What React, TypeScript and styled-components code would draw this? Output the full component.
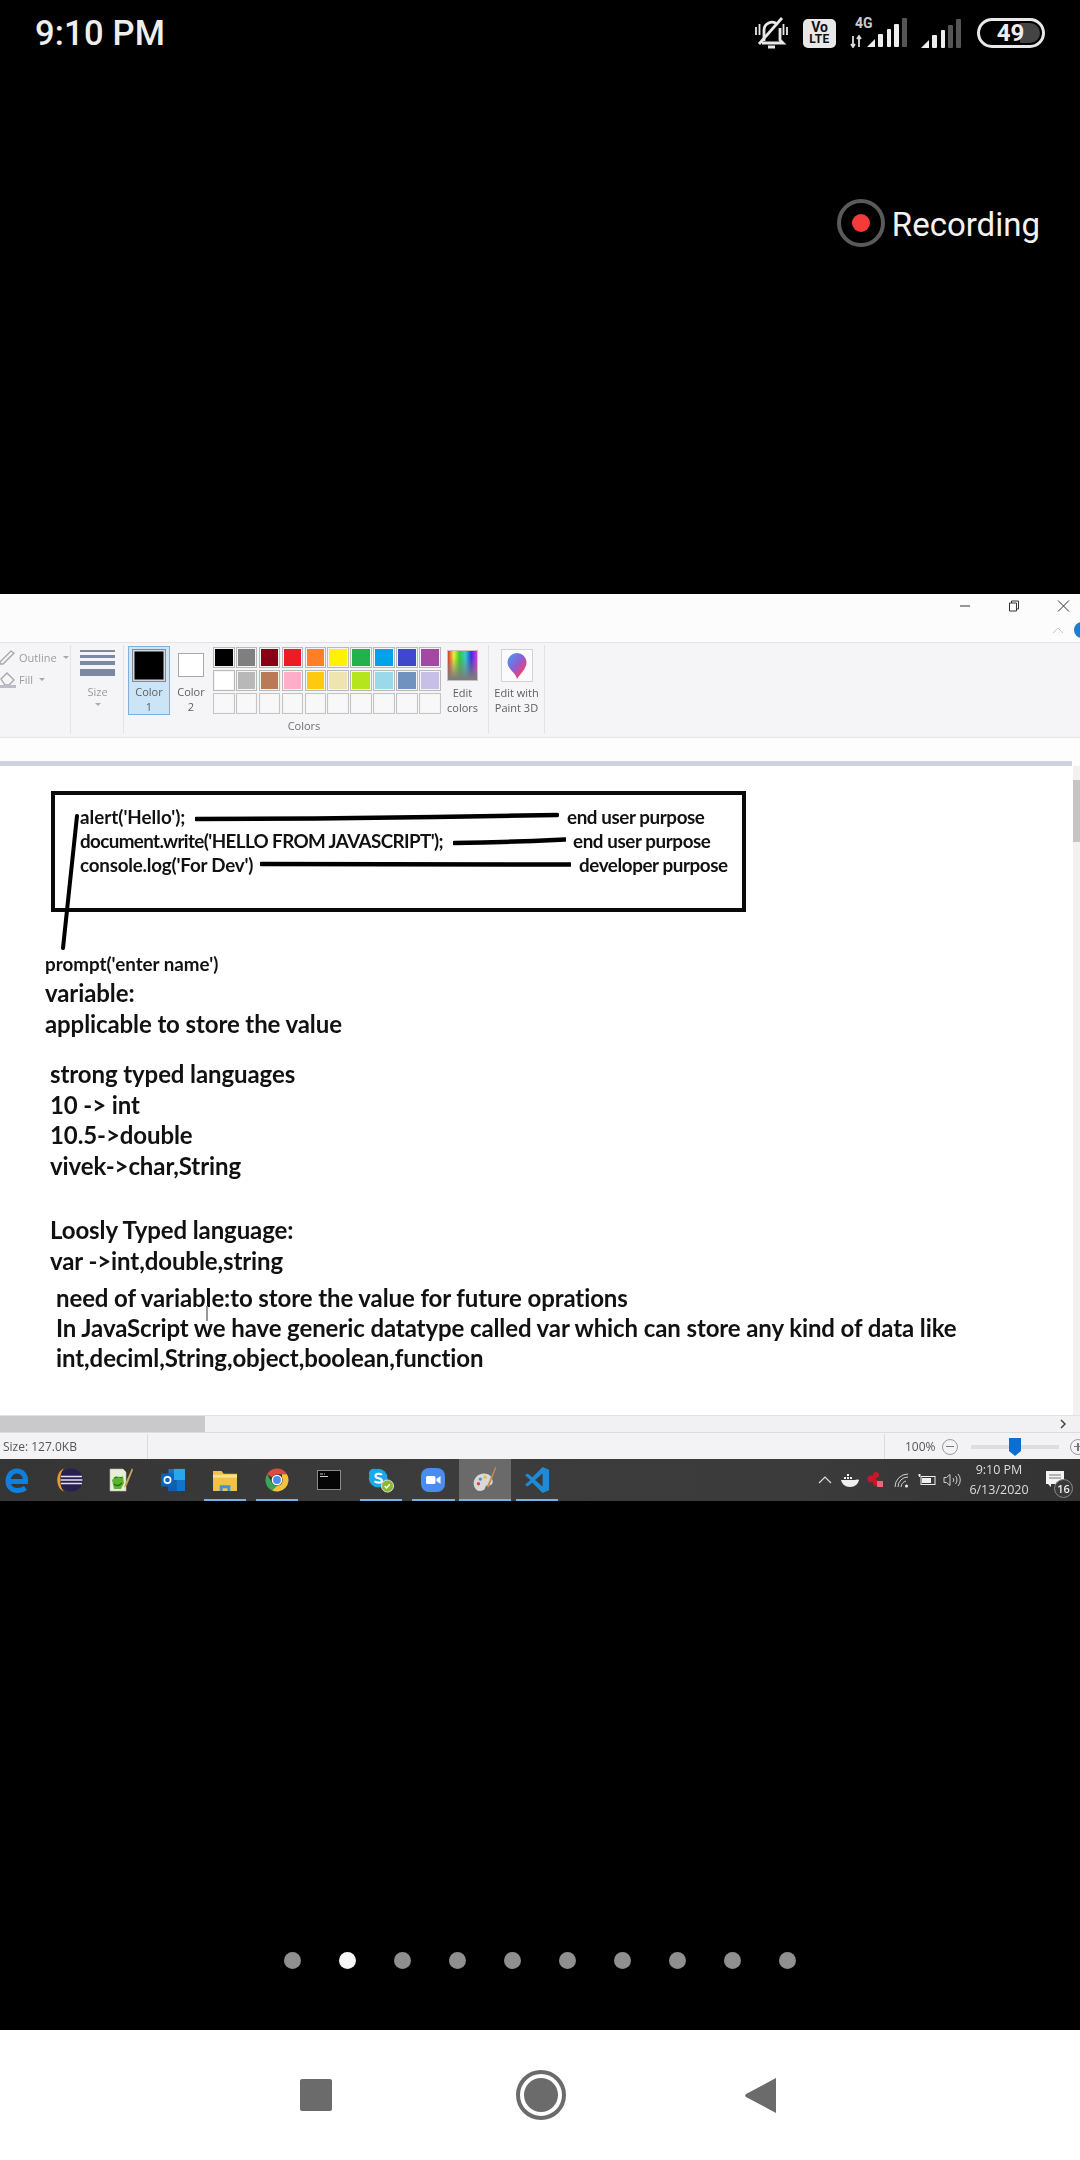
import React from "react";
import styled, { createGlobalStyle } from "styled-components";

const Global = createGlobalStyle`
  html, body { margin: 0; padding: 0; background: #000; }
  * { box-sizing: border-box; }
`;

const Screen = styled.div`
  width: 1080px;
  height: 2160px;
  background: #000;
  display: flex;
  flex-direction: column;
  overflow: hidden;
  font-family: "Roboto", "Liberation Sans", sans-serif;
`;

/* ---------- Phone status area ---------- */
const TopBlack = styled.div`
  height: 594px;
  flex: none;
`;
const StatusRow = styled.div`
  height: 66px;
  padding: 0 35px 0 35px;
  display: flex;
  align-items: center;
  justify-content: space-between;
`;
const Clock = styled.div`
  color: #eee;
  font-size: 34.5px;
  font-weight: 500;
  letter-spacing: 0.2px;
`;
const StatusIcons = styled.div`
  display: flex;
  align-items: center;
`;
const VoLte = styled.div`
  width: 33px;
  height: 29px;
  margin: 0 14px 0 15px;
  background: #e8e8e8;
  border-radius: 5px;
  color: #111;
  font-weight: 700;
  display: flex;
  flex-direction: column;
  align-items: center;
  justify-content: center;
  line-height: 12px;
`;
const VoTop = styled.span`
  font-size: 14px;
`;
const VoBottom = styled.span`
  font-size: 12px;
  letter-spacing: 0.4px;
`;
const Net = styled.div`
  position: relative;
  width: 57px;
  height: 30px;
`;
const NetLabel = styled.span`
  position: absolute;
  left: 5px;
  top: -2px;
  color: #ccc;
  font-size: 14px;
  font-weight: 700;
  line-height: 14px;
`;
const SecondSignal = styled.svg`
  margin: 0 16px 0 14px;
  display: block;
`;
const Battery = styled.div`
  position: relative;
  width: 68px;
  height: 30px;
  border: 3px solid #e8e8e8;
  border-radius: 15px;
  color: #eee;
  font-size: 24px;
  font-weight: 700;
  display: flex;
  align-items: center;
  justify-content: center;
  &::after {
    content: "";
    position: absolute;
    right: 2px;
    top: 2px;
    bottom: 2px;
    width: 20px;
    background: #444;
    border-radius: 0 10px 10px 0;
  }
`;
const BatteryValue = styled.span`
  position: relative;
  z-index: 1;
  margin-left: -1px;
`;
const RecordingRow = styled.div`
  margin-top: 133px;
  padding-right: 40px;
  display: flex;
  justify-content: flex-end;
  align-items: center;
  gap: 7px;
`;
const RecordRing = styled.div`
  width: 48px;
  height: 48px;
  border-radius: 50%;
  border: 4px solid #5a5a5a;
  background: #000;
  display: flex;
  align-items: center;
  justify-content: center;
  &::before {
    content: "";
    width: 18px;
    height: 18px;
    border-radius: 50%;
    background: #f53a3a;
  }
`;
const RecordText = styled.span`
  color: #f2f2f2;
  font-size: 33px;
  margin-top: 2px;
`;

/* ---------- Paint window ---------- */
const Window = styled.div`
  height: 907px;
  flex: none;
  display: flex;
  flex-direction: column;
  background: #fff;
  font-family: "Open Sans", "Liberation Sans", sans-serif;
  overflow: hidden;
  filter: blur(0.35px);
`;
const TitleBar = styled.div`
  height: 48px;
  background: #fdfcfd;
  display: flex;
  flex-direction: column;
`;
const Controls = styled.div`
  height: 24px;
  display: flex;
  align-items: center;
  justify-content: flex-end;
  gap: 33px;
  padding-right: 9px;
`;
const Collapse = styled.div`
  height: 24px;
  display: flex;
  align-items: center;
  justify-content: flex-end;
  gap: 10px;
`;
const HelpDot = styled.div`
  width: 16px;
  height: 16px;
  margin-right: -10px;
  border-radius: 50%;
  background: #1a7ed4;
`;
const Ribbon = styled.div`
  height: 96px;
  flex: none;
  background: #f5f5f7;
  border-top: 1px solid #e3e3e3;
  border-bottom: 1px solid #e6e6e6;
  display: flex;
`;
const Group = styled.div<{ $w: number }>`
  width: ${(p) => p.$w}px;
  flex: none;
  margin: 2px 0 3px;
  border-right: 1px solid #e4e4e6;
  display: flex;
  flex-direction: column;
`;
const ShapeRow = styled.div`
  height: 22px;
  display: flex;
  align-items: center;
  gap: 3px;
  color: #9c9c9c;
  font-size: 11px;
`;
const ShapeStack = styled.div`
  padding-top: 1px;
`;
const Caret = styled.span`
  width: 0;
  height: 0;
  margin-left: 3px;
  border-left: 3px solid transparent;
  border-right: 3px solid transparent;
  border-top: 3px solid #aaa;
`;
const SizeCol = styled.div`
  padding: 5px 8px 0 9px;
  display: flex;
  flex-direction: column;
  align-items: stretch;
`;
const SizeLine = styled.div<{ $h: number }>`
  height: ${(p) => p.$h}px;
  margin-bottom: 3.5px;
  background: #7d89a3;
`;
const SizeLabel = styled.div`
  margin-top: 5px;
  text-align: center;
  color: #9a9a9a;
  font-size: 11px;
  line-height: 16px;
`;
const CaretCenter = styled.div`
  margin: 3px auto 0;
  width: 0;
  height: 0;
  border-left: 3px solid transparent;
  border-right: 3px solid transparent;
  border-top: 3px solid #aaa;
`;
const ColorsBody = styled.div`
  display: flex;
  padding: 1px 0 0 4px;
  height: 74px;
`;
const ColorsFoot = styled.div`
  text-align: center;
  color: #707070;
  font-size: 11px;
  line-height: 16px;
  margin-left: -4px;
`;
const ColorTool = styled.div<{ $active?: boolean }>`
  width: 42px;
  height: 69px;
  display: flex;
  flex-direction: column;
  align-items: center;
  background: ${(p) => (p.$active ? "#cce4f7" : "transparent")};
  border: 1px solid ${(p) => (p.$active ? "#7eb0da" : "transparent")};
`;
const BigSwatch = styled.div`
  width: 34px;
  height: 34px;
  margin-top: 2px;
  background: #000;
  border: 1px solid #8a8a8a;
  box-shadow: inset 0 0 0 1.5px #cfd8e2;
`;
const SmallSwatch = styled.div`
  width: 26px;
  height: 25px;
  margin: 6px 0 8px;
  background: #fff;
  border: 1px solid #a8a8a8;
`;
const ToolText = styled.div<{ $mt?: number }>`
  margin-top: ${(p) => p.$mt ?? 0}px;
  color: #5e5e5e;
  font-size: 11px;
  line-height: 14.5px;
  text-align: center;
  white-space: nowrap;
`;
const Palette = styled.div`
  margin: 1px 0 0 1px;
  display: grid;
  grid-template-columns: repeat(10, 21.5px);
  grid-auto-rows: 21px;
  column-gap: 1.4px;
  row-gap: 2px;
  align-self: flex-start;
`;
const Cell = styled.div<{ $c?: string }>`
  border: 1px solid ${(p) => (p.$c ? "#b9b9b9" : "#c4c4c4")};
  background: ${(p) => p.$c ?? "#f8f8f9"};
  box-shadow: inset 0 0 0 1px #f4f4f4;
`;
const EditTool = styled.div`
  width: 44px;
  display: flex;
  flex-direction: column;
  align-items: center;
`;
const Rainbow = styled.div`
  width: 31px;
  height: 31px;
  margin: 4px 0 5px;
  border: 1px solid #c2c2c2;
  background: linear-gradient(to bottom, rgba(120, 120, 120, 0) 20%, #7c7c7c 95%),
    linear-gradient(to right, #d33, #ee3, #3c3, #3cc, #33d, #d3d);
`;
const Paint3dTool = styled.div`
  display: flex;
  flex-direction: column;
  align-items: center;
  padding-top: 4px;
`;
const Paint3dButton = styled.div`
  width: 32px;
  height: 33px;
  background: #fbfbfb;
  border: 1px solid #d2d2d2;
  display: flex;
  align-items: center;
  justify-content: center;
  margin-bottom: 4px;
`;
const RibbonGap = styled.div`
  height: 23px;
  flex: none;
  background: #fdfdfe;
`;
const Band = styled.div`
  height: 5px;
  flex: none;
  margin-right: 8px;
  background: #cdd3e2;
`;
const CanvasRow = styled.div`
  height: 649px;
  flex: none;
  display: flex;
`;
const Canvas = styled.div`
  position: relative;
  flex: 1;
  background: #fff;
  color: #111;
  font-family: "Lato", "Open Sans", sans-serif;
  font-weight: 700;
  padding-top: 25px;
`;
const VScroll = styled.div`
  width: 7px;
  background: #f1f1f2;
  padding-top: 14px;
`;
const VThumb = styled.div`
  height: 62px;
  background: #c5c5c5;
`;
const CodeBox = styled.div`
  width: 695px;
  height: 121px;
  margin-left: 51px;
  padding: 10px 0 0 25px;
  border: 4px solid #0a0a0a;
  display: flex;
  flex-direction: column;
`;
const CodeRow = styled.div`
  height: 23.8px;
  display: flex;
  align-items: center;
  font-size: 18.8px;
  white-space: nowrap;
`;
const CodeText = styled.span<{ $w: number; $ls?: number }>`
  width: ${(p) => p.$w}px;
  flex: none;
  letter-spacing: ${(p) => p.$ls ?? 0}px;
`;
const Stroke = styled.svg<{ $w: number; $ml: number }>`
  width: ${(p) => p.$w}px;
  height: 12px;
  margin-left: ${(p) => p.$ml}px;
  flex: none;
`;
const PurposeText = styled.span<{ $ml: number }>`
  margin-left: ${(p) => p.$ml}px;
  letter-spacing: -0.4px;
`;
const PromptStroke = styled.svg`
  position: absolute;
  left: 60px;
  top: 48px;
  pointer-events: none;
`;
const Note = styled.div<{ $ml: number; $mt: number; $lh: number }>`
  margin-left: ${(p) => p.$ml}px;
  margin-top: ${(p) => p.$mt}px;
  line-height: ${(p) => p.$lh}px;
  font-size: 24px;
  letter-spacing: -0.1px;
  white-space: nowrap;
`;
const PromptLine = styled.div`
  margin: 40px 0 0 45px;
  line-height: 24px;
  font-size: 18.8px;
`;
const IBeam = styled.span`
  position: absolute;
  left: 206px;
  top: 540px;
  width: 1.5px;
  height: 15px;
  background: #999;
`;
const HScroll = styled.div`
  height: 17px;
  flex: none;
  background: #f1f1f3;
  border-top: 1px solid #e2e2e2;
  display: flex;
  align-items: center;
  justify-content: space-between;
  padding-right: 13px;
`;
const HThumb = styled.div`
  width: 205px;
  height: 16px;
  background: #c9c8ca;
`;
const StatusStrip = styled.div`
  height: 27px;
  flex: none;
  background: #f3f3f5;
  border-top: 1px solid #dcdcdc;
  display: flex;
  align-items: stretch;
  color: #555;
  font-size: 12px;
`;
const SizeCell = styled.div`
  width: 148px;
  margin-top: 1px;
  padding-left: 3px;
  border-right: 1px solid #dcdcdc;
  display: flex;
  align-items: center;
`;
const ZoomCell = styled.div`
  margin: 1px 0 0 auto;
  width: 196px;
  border-left: 1px solid #dcdcdc;
  padding-left: 20px;
  display: flex;
  align-items: center;
`;
const ZoomPct = styled.span`
  width: 37px;
  flex: none;
`;
const ZoomBtn = styled.span<{ $plus?: boolean }>`
  position: relative;
  width: 16px;
  height: 16px;
  flex: none;
  border: 1px solid #9a9a9a;
  border-radius: 50%;
  display: flex;
  align-items: center;
  justify-content: center;
  &::before {
    content: "";
    width: 8px;
    height: 1.5px;
    background: #777;
  }
  &::after {
    content: "";
    display: ${(p) => (p.$plus ? "block" : "none")};
    position: absolute;
    width: 1.5px;
    height: 8px;
    background: #777;
  }
`;
const ZoomTrack = styled.div`
  position: relative;
  width: 88px;
  height: 4px;
  margin: 0 11px 0 13px;
  flex: none;
  background: #dedede;
`;
const ZoomThumb = styled.svg`
  position: absolute;
  left: 38px;
  top: -8px;
`;

/* ---------- Taskbar ---------- */
const Taskbar = styled.div`
  height: 42px;
  flex: none;
  background: linear-gradient(to right, #353535, #3c3c3c 40%, #3b3b3b 75%, #333);
  display: flex;
  margin-left: -9px;
  color: #dcdcdc;
`;
const TaskSlot = styled.div<{ $on?: boolean }>`
  position: relative;
  width: 52px;
  flex: none;
  display: flex;
  align-items: center;
  justify-content: center;
  background: ${(p) => (p.$on ? "#6a6a6a" : "transparent")};
`;
const TaskUnderline = styled.span<{ $full?: boolean; $r?: number }>`
  position: absolute;
  left: ${(p) => (p.$full ? 0 : 5)}px;
  right: ${(p) => (p.$full ? 0 : p.$r ?? 5)}px;
  bottom: 0;
  height: 2px;
  background: #74b3e3;
`;
const Tray = styled.div`
  margin-left: auto;
  display: flex;
  align-items: center;
`;
const TraySlot = styled.div`
  width: 25.5px;
  display: flex;
  align-items: center;
  justify-content: center;
`;
const TrayClock = styled.div`
  width: 68px;
  text-align: center;
  font-size: 12.5px;
  line-height: 20px;
`;
const Notify = styled.div`
  position: relative;
  width: 47px;
  height: 42px;
`;
const NotifyBadge = styled.span`
  position: absolute;
  left: 21px;
  top: 20px;
  width: 19px;
  height: 19px;
  border: 1px solid #888;
  border-radius: 50%;
  background: #3a3a3a;
  color: #eee;
  font-size: 11px;
  font-weight: 600;
  display: flex;
  align-items: center;
  justify-content: center;
`;
const NotifyBubble = styled.svg`
  position: absolute;
  left: 13px;
  top: 12px;
`;

/* ---------- Bottom ---------- */
const BottomBlack = styled.div`
  height: 529px;
  flex: none;
  padding-top: 451px;
`;
const Dots = styled.div`
  display: flex;
  padding-left: 284px;
  gap: 38px;
`;
const Dot = styled.span<{ $on?: boolean }>`
  width: 17px;
  height: 17px;
  border-radius: 50%;
  background: ${(p) => (p.$on ? "#f6f6f6" : "#8f8f8f")};
`;
const NavBar = styled.div`
  height: 130px;
  flex: none;
  background: #fff;
  display: flex;
  align-items: center;
  padding: 0 0 0 300px;
`;
const NavSquare = styled.div`
  width: 32px;
  height: 32px;
  border-radius: 2px;
  background: #6b6b6b;
`;
const NavHome = styled.div`
  width: 50px;
  height: 50px;
  margin-left: 184px;
  border: 4px solid #6b6b6b;
  border-radius: 50%;
  display: flex;
  align-items: center;
  justify-content: center;
  &::before {
    content: "";
    width: 34px;
    height: 34px;
    border-radius: 50%;
    background: #6b6b6b;
  }
`;
const NavBack = styled.svg`
  margin-left: 179px;
`;

/* ---------- Drawings ---------- */
const BellOff = () => (
  <svg width="33" height="32" viewBox="0 0 33 32" fill="none" stroke="#e8e8e8" strokeWidth="2.8">
    <path d="M9 24V13a8 8 0 0 1 13-6M25 11v12l3 3H7" />
    <path d="M4 27 27 1" strokeWidth="2.8" />
    <path d="M1 10v8M4.500 7v11M28.500 7v11M32 10v8" strokeWidth="1.800" />
    <path d="M13 30h7" strokeWidth="3" />
  </svg>
);

const Signal = ({ lit }: { lit: number }) => {
  const xs = [0, 11, 20, 27, 35];
  const ws = [8, 5, 4, 5, 5];
  const tops = [21, 16, 11, 6, 0];
  const col = (i: number) => (i < lit ? "#eee" : "#555");
  return (
    <>
      {xs.map((x, i) =>
        i === 0 ? (
          <path key={i} d={`M0 29 8 ${tops[0]}v8z`} fill={col(i)} />
        ) : (
          <rect key={i} x={x} y={tops[i]} width={ws[i]} height={29 - tops[i]} rx="1" fill={col(i)} />
        ),
      )}
    </>
  );
};

const NetIcon = () => (
  <svg width="57" height="30" viewBox="0 0 57 30" style={{ display: "block" }}>
    <g transform="translate(17 0)">
      <Signal lit={4} />
    </g>
    <path d="M3 18v11M1 26l2 3 2-3M9 29V18M7 21l2-3 2 3" stroke="#ddd" strokeWidth="1.8" fill="none" />
  </svg>
);

const PencilIcon = () => (
  <svg width="16" height="16" viewBox="0 0 16 16" fill="none" stroke="#a6a6a6" strokeWidth="1.3">
    <path d="M0 13 L11 2 L14 4 L3 15 L0 15Z" />
  </svg>
);
const BucketIcon = () => (
  <svg width="16" height="17" viewBox="0 0 16 17" fill="none" stroke="#a6a6a6" strokeWidth="1.3">
    <path d="M1 8 7 2l7 7-5 5H5z" />
    <rect x="0" y="14" width="16" height="3" fill="#b8bdc8" stroke="none" />
  </svg>
);

const Balloon = () => (
  <svg width="20" height="28" viewBox="0 0 20 28">
    <defs>
      <linearGradient id="ball" x1="0" y1="0" x2="1" y2="1">
        <stop offset="0" stopColor="#3aa7e8" />
        <stop offset="0.45" stopColor="#8a5fd8" />
        <stop offset="0.75" stopColor="#e8427a" />
        <stop offset="1" stopColor="#f58a2a" />
      </linearGradient>
    </defs>
    <path d="M10 1a9.5 9.5 0 0 1 9.5 9.5C19.500 17 13 22 10 27 9 21 .5 17 .5 10.500A9.500 9.500 0 0 1 10 1z" fill="url(#ball)" />
  </svg>
);

const EdgeIcon = () => (
  <svg width="24" height="25" viewBox="0 0 24 25" fill="none" stroke="#0f80dc" strokeWidth="5">
    <path d="M3 13.500h17.500C21 7 17 3 12 3 7 3 3 7 3 13c0 6 4 9.500 9.500 9.500 3 0 6-1 8-2.500" />
  </svg>
);
const EclipseIcon = () => (
  <svg width="27" height="24" viewBox="0 0 27 24">
    <ellipse cx="15" cy="12" rx="12" ry="11.500" fill="#2a2050" />
    <path d="M8 .5C-1 4-1 20 8 23.500 3 19 3 5 8 .5z" fill="#e89a2c" />
    <path d="M5 8.500h21M4.500 12h22M5 15.500h21" stroke="#e4e2f0" strokeWidth="1.500" />
  </svg>
);
const NotepadIcon = () => (
  <svg width="24" height="24" viewBox="0 0 24 24">
    <path d="M1 1h13l3 3v19H1z" fill="#e9efd6" stroke="#bbb" strokeWidth="0.6" />
    <path d="M3 12l4-4 3 2 4-2 1 7-3 6H5z" fill="#5cb531" />
    <path d="M5 10c2-1 6-1 8 0M5 16c2 2 5 2 8-1" stroke="#1e6e12" strokeWidth="1.200" fill="none" />
    <path d="M23 0 16 16l-1 4 3-3L24 2z" fill="#c9a455" />
  </svg>
);
const OutlookIcon = () => (
  <svg width="24" height="24" viewBox="0 0 26 26">
    <rect x="8" y="1" width="18" height="24" fill="#1273c9" />
    <rect x="14" y="1" width="12" height="12" fill="#28a8ea" />
    <rect x="8" y="13" width="9" height="12" fill="#0f5ea8" />
    <rect x="0" y="6" width="14" height="14" rx="1" fill="#0a65b8" />
    <circle cx="7" cy="13" r="3.400" fill="none" stroke="#fff" strokeWidth="1.800" />
  </svg>
);
const FolderIcon = () => (
  <svg width="24" height="23" viewBox="0 0 25 24">
    <path d="M0 2h9l2 3h14v18H0z" fill="#f0c24a" />
    <path d="M0 6h25v3H0z" fill="#fbe08a" />
    <path d="M7 23v-6h11v6h-3v-3h-5v3z" fill="#3a96d8" />
  </svg>
);
const ChromeIcon = () => (
  <svg width="24" height="24" viewBox="-13 -13 26 26">
    <path d="M0-12.500A12.500 12.500 0 0 1 10.800-6.250H0A6.250 6.250 0 0 0-5.400-3.100L-10.800-6.250A12.500 12.500 0 0 1 0-12.500z" fill="#dd4b3e" />
    <path d="M-10.800-6.250-5.400 3.100A6.250 6.250 0 0 0 0 6.250L-5.400 11.300A12.500 12.500 0 0 1-10.800-6.250z" fill="#3aa757" />
    <path d="M10.800-6.250A12.500 12.500 0 0 1-5.400 11.300L0 6.250A6.250 6.250 0 0 0 5.400-3.100V-6.250z" fill="#f5c33b" />
    <circle r="5" fill="#4a8df0" stroke="#fff" strokeWidth="1.500" />
  </svg>
);
const CmdIcon = () => (
  <svg width="24" height="20" viewBox="0 0 24 20">
    <rect x="0.500" y="0.500" width="23" height="19" fill="#050505" stroke="#8a8a8a" />
    <path d="M3 4h3M7 4h1M3 6.500h8" stroke="#ccc" strokeWidth="1" />
  </svg>
);
const SkypeIcon = () => (
  <svg width="28" height="26" viewBox="0 0 30 28">
    <circle cx="12" cy="12" r="10" fill="#1aa9e8" />
    <circle cx="7" cy="7" r="5" fill="#1aa9e8" />
    <circle cx="17" cy="17" r="5" fill="#1aa9e8" />
    <path d="M16 8.500c-1-1.500-7-2-7 1.200 0 3.200 7 1.800 7 5 0 3-6 2.600-8 .6" stroke="#fff" strokeWidth="2.300" fill="none" />
    <circle cx="22" cy="20.500" r="6.500" fill="#8ab82f" stroke="#e8e8e8" strokeWidth="1" />
    <path d="M19 20.500l2 2 3.500-4" stroke="#fff" strokeWidth="1.500" fill="none" />
  </svg>
);
const ZoomIcon = () => (
  <svg width="24" height="24" viewBox="0 0 24 24">
    <rect width="24" height="24" rx="8" fill="#4a8cf2" />
    <rect x="5" y="8" width="9.500" height="8" rx="1.500" fill="#fff" />
    <path d="M15.500 11l4-3v8l-4-3z" fill="#fff" />
  </svg>
);
const PaletteIcon = () => (
  <svg width="26" height="28" viewBox="0 0 26 30">
    <path d="M12 8C5 8 0 14 1 20s6 8 10 6 1-5 5-5 6-2 5-6-4-7-9-7z" fill="#d8d8d8" />
    <circle cx="6" cy="19" r="1.800" fill="#d64a3c" />
    <circle cx="8" cy="14" r="1.800" fill="#4a90d0" />
    <circle cx="13" cy="12" r="1.800" fill="#e5c23a" />
    <path d="M24 1 15 22l2 1L25 2z" fill="#c78a52" />
  </svg>
);
const VsCodeIcon = () => (
  <svg width="26" height="26" viewBox="0 0 26 28">
    <path d="M19 0 26 3v22l-7 3-11-11-5 4-3-2 6-5-6-5 3-2 5 4z" fill="#1f8ad6" />
    <path d="M19 7v14l-8-7z" fill="#3a3a3a" />
  </svg>
);
const Whale = () => (
  <svg width="18" height="13" viewBox="0 0 18 13" fill="#f0f0f0">
    <path d="M0 6h14c1 0 2-1 4 0-1 4-4 7-9 7S1 10 0 6z" />
    <rect x="3" y="3" width="2" height="2" />
    <rect x="6" y="3" width="2" height="2" />
    <rect x="9" y="3" width="2" height="2" />
    <rect x="6" y="0" width="2" height="2" />
  </svg>
);
const RedCluster = () => (
  <svg width="18" height="16" viewBox="0 0 18 16">
    <circle cx="4" cy="7" r="3.500" fill="#c8172a" />
    <circle cx="9" cy="3" r="3" fill="#c8172a" />
    <circle cx="9" cy="11" r="3" fill="#c8172a" />
    <path d="M4 7 9 3v8z" fill="#c8172a" />
    <rect x="10" y="9" width="6" height="6" fill="#e86a78" />
  </svg>
);
const Wifi = () => (
  <svg width="15" height="15" viewBox="0 0 15 15" fill="none" stroke="#cfcfcf" strokeWidth="1">
    <path d="M1 14A13 13 0 0 1 14 1M4 14A10 10 0 0 1 14 4M7 14A7 7 0 0 1 12 8" />
    <circle cx="12.500" cy="13" r="1.500" fill="#eee" stroke="none" />
  </svg>
);
const BatteryTray = () => (
  <svg width="18" height="12" viewBox="0 0 18 12">
    <rect x="3" y="2.500" width="14" height="8" fill="none" stroke="#eee" />
    <rect x="4" y="4" width="9" height="5" fill="#eee" />
    <path d="M0 1h3M1.500 0v3" stroke="#eee" />
  </svg>
);
const Speaker = () => (
  <svg width="18" height="14" viewBox="0 0 18 14" fill="none" stroke="#cfcfcf" strokeWidth="1">
    <path d="M1 4.500h2.500L7 1.500v11L3.500 9.500H1z" />
    <path d="M10 5a3 3 0 0 1 0 4M12.500 3a6 6 0 0 1 0 8M15 1a9 9 0 0 1 0 12" />
  </svg>
);

const row1 = ["#000000", "#7f7f7f", "#880015", "#ed1c24", "#ff7f27", "#fff200", "#22b14c", "#00a2e8", "#3f48cc", "#a349a4"];
const row2 = ["#ffffff", "#b8b8b8", "#b97a57", "#ffaec9", "#ffc90e", "#efe4b0", "#b5e61d", "#99d9ea", "#7092be", "#c8bfe7"];
const row3 = Array.from({ length: 10 }, () => undefined as string | undefined);

export default function App() {
  return (
    <Screen>
      <Global />
      <TopBlack>
        <StatusRow>
          <Clock>9:10 PM</Clock>
          <StatusIcons>
            <BellOff />
            <VoLte>
              <VoTop>Vo</VoTop>
              <VoBottom>LTE</VoBottom>
            </VoLte>
            <Net>
              <NetIcon />
              <NetLabel>4G</NetLabel>
            </Net>
            <SecondSignal width="40" height="29" viewBox="0 0 40 29">
              <Signal lit={3} />
            </SecondSignal>
            <Battery>
              <BatteryValue>49</BatteryValue>
            </Battery>
          </StatusIcons>
        </StatusRow>
        <RecordingRow>
          <RecordRing />
          <RecordText>Recording</RecordText>
        </RecordingRow>
      </TopBlack>

      <Window>
        <TitleBar>
          <Controls>
            <svg width="16" height="12" viewBox="0 0 16 12">
              <path d="M3 6h10" stroke="#333" strokeWidth="1" />
            </svg>
            <svg width="16" height="12" viewBox="0 0 16 12" fill="none" stroke="#333" strokeWidth="1">
              <path d="M3.500 3h7v8h-7zM5.500 3V1h7v8h-2" />
            </svg>
            <svg width="16" height="12" viewBox="0 0 16 12" fill="none" stroke="#333" strokeWidth="1">
              <path d="M3 .5l11 11M14 .5l-11 11" />
            </svg>
          </Controls>
          <Collapse>
            <svg width="12" height="8" viewBox="0 0 12 8" fill="none" stroke="#c4c4c4" strokeWidth="1">
              <path d="M1 7l5-5 5 5" />
            </svg>
            <HelpDot />
          </Collapse>
        </TitleBar>

        <Ribbon>
          <Group $w={71}>
            <ShapeStack>
              <ShapeRow>
                <PencilIcon />
                Outline
                <Caret />
              </ShapeRow>
              <ShapeRow>
                <BucketIcon />
                Fill
                <Caret />
              </ShapeRow>
            </ShapeStack>
          </Group>
          <Group $w={53}>
            <SizeCol>
              <SizeLine $h={1.5} />
              <SizeLine $h={2.5} />
              <SizeLine $h={4} />
              <SizeLine $h={7} />
              <SizeLabel>Size</SizeLabel>
              <CaretCenter />
            </SizeCol>
          </Group>
          <Group $w={365}>
            <ColorsBody>
              <ColorTool $active>
                <BigSwatch />
                <ToolText $mt={3}>
                  Color
                  <br />1
                </ToolText>
              </ColorTool>
              <ColorTool>
                <SmallSwatch />
                <ToolText>
                  Color
                  <br />2
                </ToolText>
              </ColorTool>
              <Palette>
                {[...row1, ...row2, ...row3].map((c, i) => (
                  <Cell key={i} $c={c} />
                ))}
              </Palette>
              <EditTool>
                <Rainbow />
                <ToolText>
                  Edit
                  <br />
                  colors
                </ToolText>
              </EditTool>
            </ColorsBody>
            <ColorsFoot>Colors</ColorsFoot>
          </Group>
          <Group $w={56}>
            <Paint3dTool>
              <Paint3dButton>
                <Balloon />
              </Paint3dButton>
              <ToolText>
                Edit with
                <br />
                Paint 3D
              </ToolText>
            </Paint3dTool>
          </Group>
        </Ribbon>
        <RibbonGap />
        <Band />

        <CanvasRow>
          <Canvas>
            <CodeBox>
              <CodeRow>
                <CodeText $w={107}>alert('Hello');</CodeText>
                <Stroke $w={364} $ml={8} viewBox="0 0 364 12">
                  <path d="M1 8 L120 7.500 L240 6 L362 4" stroke="#000" strokeWidth="4.500" fill="none" strokeLinecap="round" />
                </Stroke>
                <PurposeText $ml={8}>end user purpose</PurposeText>
              </CodeRow>
              <CodeRow>
                <CodeText $w={363} $ls={-0.6}>document.write('HELLO FROM JAVASCRIPT');</CodeText>
                <Stroke $w={113} $ml={10} viewBox="0 0 113 12">
                  <path d="M1 8 L30 7.500 L80 6 L112 4.500" stroke="#000" strokeWidth="4.500" fill="none" strokeLinecap="round" />
                </Stroke>
                <PurposeText $ml={7}>end user purpose</PurposeText>
              </CodeRow>
              <CodeRow>
                <CodeText $w={174} $ls={-0.2}>console.log('For Dev')</CodeText>
                <Stroke $w={311} $ml={6} viewBox="0 0 311 12">
                  <path d="M1 6 L310 6.500" stroke="#000" strokeWidth="4.500" fill="none" strokeLinecap="round" />
                </Stroke>
                <PurposeText $ml={8}>developer purpose</PurposeText>
              </CodeRow>
            </CodeBox>
            <PromptStroke width="20" height="136" viewBox="0 0 20 136">
              <path d="M17 2 L3 134" stroke="#000" strokeWidth="4" fill="none" strokeLinecap="round" />
            </PromptStroke>
            <PromptLine>prompt('enter name')</PromptLine>
            <Note $ml={45} $mt={1} $lh={31}>
              variable:
              <br />
              applicable to store the value
            </Note>
            <Note $ml={50} $mt={20} $lh={30.7}>
              strong typed languages
              <br />
              10 -&gt; int
              <br />
              10.5-&gt;double
              <br />
              vivek-&gt;char,String
            </Note>
            <Note $ml={50} $mt={32} $lh={31}>
              Loosly Typed language:
              <br />
              var -&gt;int,double,string
            </Note>
            <Note $ml={56} $mt={7} $lh={30}>
              need of variable:to store the value for future oprations
              <br />
              In JavaScript we have generic datatype called var which can store any kind of data like
              <br />
              int,deciml,String,object,boolean,function
            </Note>
            <IBeam />
          </Canvas>
          <VScroll>
            <VThumb />
          </VScroll>
        </CanvasRow>

        <HScroll>
          <HThumb />
          <svg width="8" height="10" viewBox="0 0 8 10" fill="none" stroke="#444" strokeWidth="1.500">
            <path d="M2 1l4 4-4 4" />
          </svg>
        </HScroll>
        <StatusStrip>
          <SizeCell>Size: 127.0KB</SizeCell>
          <ZoomCell>
            <ZoomPct>100%</ZoomPct>
            <ZoomBtn />
            <ZoomTrack>
              <ZoomThumb width="12" height="19" viewBox="0 0 12 19">
                <path d="M0 1h12v13l-6 5-6-5z" fill="#0a6fd0" />
              </ZoomThumb>
            </ZoomTrack>
            <ZoomBtn $plus />
          </ZoomCell>
        </StatusStrip>

        <Taskbar>
          <TaskSlot>
            <EdgeIcon />
          </TaskSlot>
          <TaskSlot>
            <EclipseIcon />
          </TaskSlot>
          <TaskSlot>
            <NotepadIcon />
          </TaskSlot>
          <TaskSlot>
            <OutlookIcon />
          </TaskSlot>
          <TaskSlot>
            <FolderIcon />
            <TaskUnderline />
          </TaskSlot>
          <TaskSlot>
            <ChromeIcon />
            <TaskUnderline />
          </TaskSlot>
          <TaskSlot>
            <CmdIcon />
          </TaskSlot>
          <TaskSlot>
            <SkypeIcon />
            <TaskUnderline />
          </TaskSlot>
          <TaskSlot>
            <ZoomIcon />
            <TaskUnderline $r={4} />
          </TaskSlot>
          <TaskSlot $on>
            <PaletteIcon />
            <TaskUnderline $full />
          </TaskSlot>
          <TaskSlot>
            <VsCodeIcon />
            <TaskUnderline />
          </TaskSlot>
          <Tray>
            <TraySlot>
              <svg width="14" height="8" viewBox="0 0 14 8" fill="none" stroke="#ddd" strokeWidth="1.200">
                <path d="M1 7l6-6 6 6" />
              </svg>
            </TraySlot>
            <TraySlot>
              <Whale />
            </TraySlot>
            <TraySlot>
              <RedCluster />
            </TraySlot>
            <TraySlot>
              <Wifi />
            </TraySlot>
            <TraySlot>
              <BatteryTray />
            </TraySlot>
            <TraySlot>
              <Speaker />
            </TraySlot>
            <TrayClock>
              9:10 PM
              <br />
              6/13/2020
            </TrayClock>
            <Notify>
              <NotifyBubble width="18" height="16" viewBox="0 0 18 16">
                <path d="M0 0h18v13H5v3l-3-3H0z" fill="#f4f4f4" />
                <path d="M3 4h12M3 7h12" stroke="#777" strokeWidth="1" />
              </NotifyBubble>
              <NotifyBadge>16</NotifyBadge>
            </Notify>
          </Tray>
        </Taskbar>
      </Window>

      <BottomBlack>
        <Dots>
          {Array.from({ length: 10 }, (_, i) => (
            <Dot key={i} $on={i === 1} />
          ))}
        </Dots>
      </BottomBlack>
      <NavBar>
        <NavSquare />
        <NavHome />
        <NavBack width="31" height="37" viewBox="0 0 31 37">
          <path d="M31 1v35L1 20a2 2 0 0 1 0-3z" fill="#6b6b6b" />
        </NavBack>
      </NavBar>
    </Screen>
  );
}
